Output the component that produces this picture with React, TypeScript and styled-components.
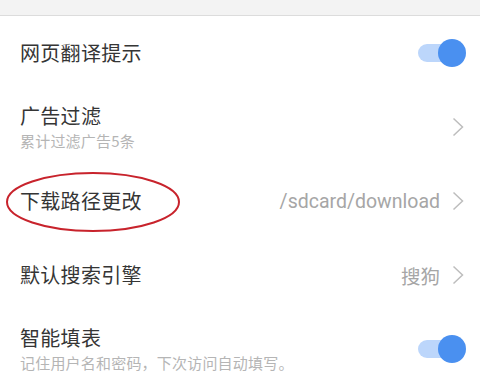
import React from "react";
import styled, { createGlobalStyle } from "styled-components";

const Global = createGlobalStyle`
  html, body { margin: 0; padding: 0; background: #fff; }
  body { font-family: Roboto, "Noto Sans CJK SC", sans-serif; }
`;

const Page = styled.div`
  width: 480px;
  height: 390px;
  overflow: hidden;
  background: #fff;
  display: flex;
  flex-direction: column;
`;

const TopBar = styled.div`
  height: 15px;
  background: #f3f3f3;
  border-bottom: 1px solid #dcdcdc;
  flex-shrink: 0;
`;

const Row = styled.div`
  height: 74px;
  display: flex;
  align-items: center;
  padding: 0 15px 0 20px;
  position: relative;
  flex-shrink: 0;
`;

const Texts = styled.div`
  flex: 1;
  display: flex;
  flex-direction: column;
  min-width: 0;
`;

const Title = styled.div`
  font-family: "Noto Sans CJK SC", sans-serif;
  font-size: 20px;
  line-height: 26px;
  color: #353535;
  letter-spacing: 0.3px;
`;

const Sub = styled.div`
  font-family: "Noto Sans CJK SC", sans-serif;
  font-size: 15px;
  line-height: 20px;
  color: #b5b5b5;
  margin-top: 2px;
  letter-spacing: 0.2px;
  white-space: nowrap;
`;

const Value = styled.span`
  font-family: Roboto, "Noto Sans CJK SC", sans-serif;
  font-size: 19.5px;
  color: #a6a6a6;
  margin-right: 12px;
`;

const Track = styled.div<{ $on: boolean }>`
  width: 46px;
  height: 18px;
  border-radius: 9px;
  background: ${(p) => (p.$on ? "#bcd6fb" : "#ddd")};
  position: relative;
  margin-right: 1px;
`;

const Knob = styled.div<{ $on: boolean }>`
  position: absolute;
  top: 50%;
  ${(p) => (p.$on ? "right: -2px;" : "left: -2px;")}
  width: 28px;
  height: 28px;
  margin-top: -14px;
  border-radius: 50%;
  background: ${(p) => (p.$on ? "#4a90f0" : "#fafafa")};
`;

const Chevron = styled.svg`
  width: 12px;
  height: 20px;
  margin-right: 1px;
  flex-shrink: 0;
`;

const Highlight = styled.svg`
  position: absolute;
  left: 4px;
  top: 6px;
  width: 178px;
  height: 64px;
  pointer-events: none;
`;

const Arrow = () => (
  <Chevron viewBox="0 0 12 20">
    <path d="M1.5 1.5 L10.5 10 L1.5 18.5" fill="none" stroke="#bdbdbd" strokeWidth="1.5" />
  </Chevron>
);

const Toggle = ({ on }: { on: boolean }) => (
  <Track $on={on}>
    <Knob $on={on} />
  </Track>
);

export default function App() {
  return (
    <>
      <Global />
      <Page>
        <TopBar />
        <Row>
          <Texts>
            <Title>网页翻译提示</Title>
          </Texts>
          <Toggle on />
        </Row>
        <Row>
          <Texts>
            <Title>广告过滤</Title>
            <Sub>累计过滤广告5条</Sub>
          </Texts>
          <Arrow />
        </Row>
        <Row>
          <Texts>
            <Title>下载路径更改</Title>
          </Texts>
          <Value>/sdcard/download</Value>
          <Arrow />
          <Highlight viewBox="0 0 178 64">
            <ellipse cx="89" cy="32" rx="86" ry="29" fill="none" stroke="#c8232c" strokeWidth="2" />
          </Highlight>
        </Row>
        <Row>
          <Texts>
            <Title>默认搜索引擎</Title>
          </Texts>
          <Value>搜狗</Value>
          <Arrow />
        </Row>
        <Row>
          <Texts>
            <Title>智能填表</Title>
            <Sub>记住用户名和密码，下次访问自动填写。</Sub>
          </Texts>
          <Toggle on />
        </Row>
      </Page>
    </>
  );
}
